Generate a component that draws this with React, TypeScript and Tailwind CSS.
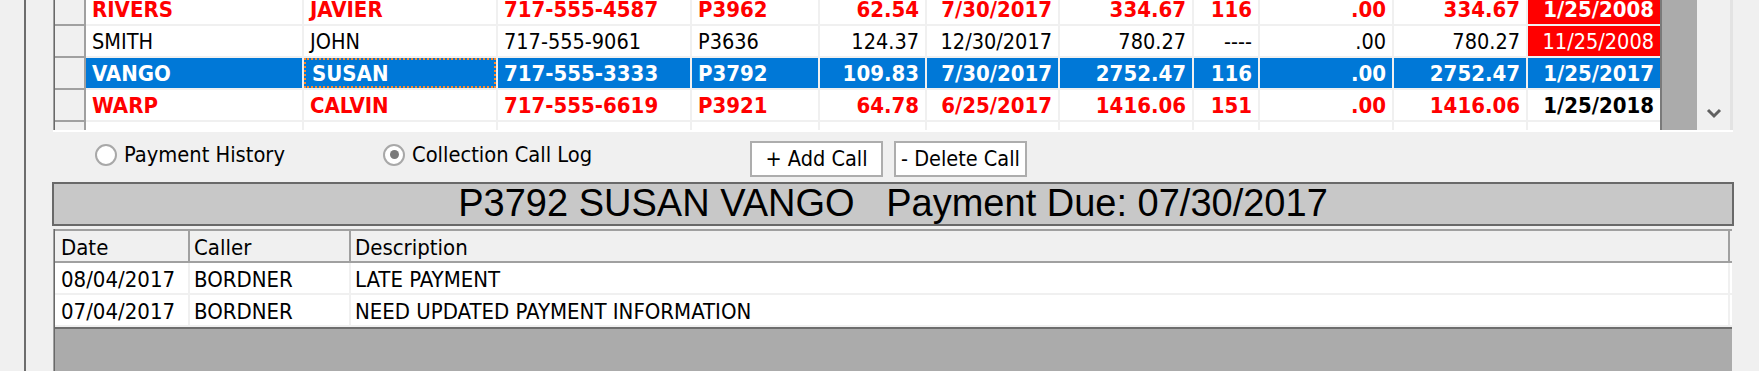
import React from "react";

type RowStyle = "red" | "normal" | "selected";
type DateStyle = "redbg" | "blackbold" | "none";

interface Row {
  cells: string[];
  style: RowStyle;
  dateStyle: DateStyle;
  low?: boolean;
}

const FONT = '"DejaVu Sans Condensed", "DejaVu Sans", "Liberation Sans", sans-serif';

const cols: { w: string; right: boolean }[] = [
  { w: "w-[216px]", right: false },
  { w: "w-[192px]", right: false },
  { w: "w-[192px]", right: false },
  { w: "w-[126px]", right: false },
  { w: "w-[105px]", right: true },
  { w: "w-[131px]", right: true },
  { w: "w-[132px]", right: true },
  { w: "w-[64px]", right: true },
  { w: "w-[132px]", right: true },
  { w: "w-[132px]", right: true },
  { w: "w-[132px]", right: true },
];

const rows: Row[] = [
  {
    cells: ["RIVERS", "JAVIER", "717-555-4587", "P3962", "62.54", "7/30/2017", "334.67", "116", ".00", "334.67", "1/25/2008"],
    style: "red",
    dateStyle: "redbg",
  },
  {
    cells: ["SMITH", "JOHN", "717-555-9061", "P3636", "124.37", "12/30/2017", "780.27", "----", ".00", "780.27", "11/25/2008"],
    style: "normal",
    dateStyle: "redbg",
  },
  {
    cells: ["VANGO", "SUSAN", "717-555-3333", "P3792", "109.83", "7/30/2017", "2752.47", "116", ".00", "2752.47", "1/25/2017"],
    style: "selected",
    dateStyle: "none",
  },
  {
    cells: ["WARP", "CALVIN", "717-555-6619", "P3921", "64.78", "6/25/2017", "1416.06", "151", ".00", "1416.06", "1/25/2018"],
    style: "red",
    dateStyle: "blackbold",
  },
  {
    cells: ["", "", "", "", "", "12/25/2017", "", "", "", "", "12/25/2017"],
    style: "normal",
    dateStyle: "none",
    low: true,
  },
];

function cellClass(row: Row, ci: number): string {
  const isLast = ci === cols.length - 1;
  let bg = "bg-white";
  let color = "text-black";
  let weight = "font-normal text-[21.5px]";
  if (row.style === "red") {
    color = "text-[#ff0000]";
    weight = "font-bold text-[22px]";
  } else if (row.style === "selected") {
    bg = "bg-[#0078d7]";
    color = "text-white";
    weight = "font-bold text-[22px]";
  }
  if (isLast) {
    if (row.dateStyle === "redbg") {
      bg = "bg-[#ff0000]";
      color = "text-white";
    } else if (row.dateStyle === "blackbold") {
      color = "text-black";
    }
  }
  return `${bg} ${color} ${weight}`;
}

function GridRow({ row }: { row: Row }) {
  return (
    <div className="flex h-[32px] shrink-0">
      <div className="w-[29px] h-full bg-[#f0f0f0] border-b-2 border-[#a0a0a0]" />
      <div className="w-[2px] h-full bg-[#a0a0a0]" />
      {cols.map((c, ci) => {
        const isLast = ci === cols.length - 1;
        const focus = row.style === "selected" && ci === 1;
        return (
          <React.Fragment key={ci}>
            <div className={`${c.w} h-full border-b-2 border-[#f0f0f0] ${cellClass(row, ci)}`}>
              <div
                className={`h-full flex items-center leading-[24px] whitespace-nowrap overflow-hidden ${
                  row.low ? "pt-[9px]" : "pt-[2px]"
                } ${c.right ? "justify-end pr-[6px]" : "justify-start pl-[6px]"} ${
                  focus ? "border-2 border-dotted border-[#ff8a2a] pl-[4px]" : ""
                }`}
              >
                {row.cells[ci]}
              </div>
            </div>
            {!isLast && <div className="w-[2px] h-full bg-[#f0f0f0]" />}
          </React.Fragment>
        );
      })}
    </div>
  );
}

function TopGrid() {
  return (
    <div className="ml-[1px] w-[1680px] h-[132px] flex flex-col shrink-0">
      <div className="h-[130px] flex overflow-hidden">
        <div className="w-[1px] h-full bg-[#a0a0a0]" />
        <div className="w-[1px] h-full bg-[#696969]" />
        <div className="w-[1605px] h-full overflow-hidden">
          <div className="-mt-[6px] flex flex-col">
            {rows.map((r, i) => (
              <GridRow key={i} row={r} />
            ))}
          </div>
        </div>
        <div className="w-[2px] h-full bg-[#7a7a7a]" />
        <div className="w-[35px] h-full bg-[#ababab]" />
        <div className="w-[33px] h-full bg-[#f0f0f0] flex flex-col justify-end">
          <div className="h-[34px] flex items-center justify-center">
            <svg width="16" height="11" viewBox="0 0 16 11">
              <polyline points="2,2 8,8 14,2" fill="none" stroke="#606060" strokeWidth="3" />
            </svg>
          </div>
        </div>
        <div className="w-[3px] h-full bg-[#e3e3e3]" />
      </div>
      <div className="h-[2px] bg-white" />
    </div>
  );
}

function Radio({ checked, label, width }: { checked: boolean; label: string; width: string }) {
  return (
    <div className={`${width} flex items-center`}>
      <div className="w-[22px] h-[22px] rounded-full border-2 border-[#a8a8a8] bg-white flex items-center justify-center shrink-0">
        {checked && <div className="w-[9px] h-[9px] rounded-full bg-[#7a7a7a]" />}
      </div>
      <span className="ml-[7px] text-[21.7px] text-black whitespace-nowrap">{label}</span>
    </div>
  );
}

function Button({ label }: { label: string }) {
  return (
    <div className="w-[133px] h-[36px] border-2 border-[#adadad] bg-white flex items-center justify-center text-[21.5px] text-black whitespace-nowrap">
      {label}
    </div>
  );
}

function Controls() {
  return (
    <div className="h-[50px] flex shrink-0">
      <div className="ml-[43px] flex items-center h-[46px]">
        <Radio checked={false} label="Payment History" width="w-[288px]" />
        <Radio checked={true} label="Collection Call Log" width="w-[367px]" />
      </div>
      <div className="mt-[9px] flex gap-[11px]">
        <Button label="+ Add Call" />
        <Button label="- Delete Call" />
      </div>
    </div>
  );
}

function Band() {
  return (
    <div
      className="w-[1682px] h-[44px] border-2 border-[#696969] bg-[#c8c8c8] flex items-center justify-center pb-[2px] shrink-0"
      style={{ fontFamily: '"Liberation Sans", Arial, sans-serif' }}
    >
      <span className="text-[38px] text-black whitespace-pre leading-none">
        {"P3792 SUSAN VANGO   Payment Due: 07/30/2017"}
      </span>
    </div>
  );
}

const logCols = ["w-[131px]", "w-[159px]", "w-[1377px]"];
const logRows = [
  ["08/04/2017", "BORDNER", "LATE PAYMENT"],
  ["07/04/2017", "BORDNER", "NEED UPDATED PAYMENT INFORMATION"],
];

function CallLog() {
  return (
    <div className="ml-[1px] w-[1679px] flex-1 flex flex-col mt-[3px]">
      <div className="flex-1 flex">
        <div className="w-[1px] bg-[#a0a0a0]" />
        <div className="w-[1px] bg-[#696969]" />
        <div className="flex-1 flex flex-col">
          <div className="h-[2px] bg-[#a0a0a0]" />
          <div className="flex h-[32px] bg-[#f0f0f0] border-b-2 border-[#a0a0a0]">
            <div className="w-[2px] bg-[#f0f0f0]" />
            {["Date", "Caller", "Description"].map((h, i) => (
              <React.Fragment key={i}>
                <div className={`${logCols[i]} flex items-center pt-[2px] pl-[4px] text-[22px] text-black`}>{h}</div>
                <div className="w-[2px] bg-[#a0a0a0]" />
              </React.Fragment>
            ))}
          </div>
          {logRows.map((r, ri) => (
            <div key={ri} className="flex h-[32px] bg-white border-b-2 border-[#f0f0f0]">
              <div className="w-[2px] bg-white" />
              {r.map((c, ci) => (
                <React.Fragment key={ci}>
                  <div className={`${logCols[ci]} flex items-center pt-[2px] pl-[4px] text-[22px] text-black whitespace-nowrap`}>{c}</div>
                  <div className="w-[2px] bg-[#f0f0f0]" />
                </React.Fragment>
              ))}
            </div>
          ))}
          <div className="h-[2px] bg-[#6d6d6d]" />
          <div className="flex-1 bg-[#ababab]" />
        </div>
      </div>
    </div>
  );
}

export default function App() {
  return (
    <div
      className="w-[1759px] h-[371px] bg-[#f0f0f0] flex overflow-hidden"
      style={{ fontFamily: FONT }}
    >
      <div className="w-[24px] h-full shrink-0" />
      <div className="w-[2px] h-full bg-[#6d6d6d] shrink-0" />
      <div className="w-[26px] h-full shrink-0" />
      <div className="w-[1682px] h-full flex flex-col shrink-0">
        <TopGrid />
        <Controls />
        <Band />
        <CallLog />
      </div>
    </div>
  );
}
